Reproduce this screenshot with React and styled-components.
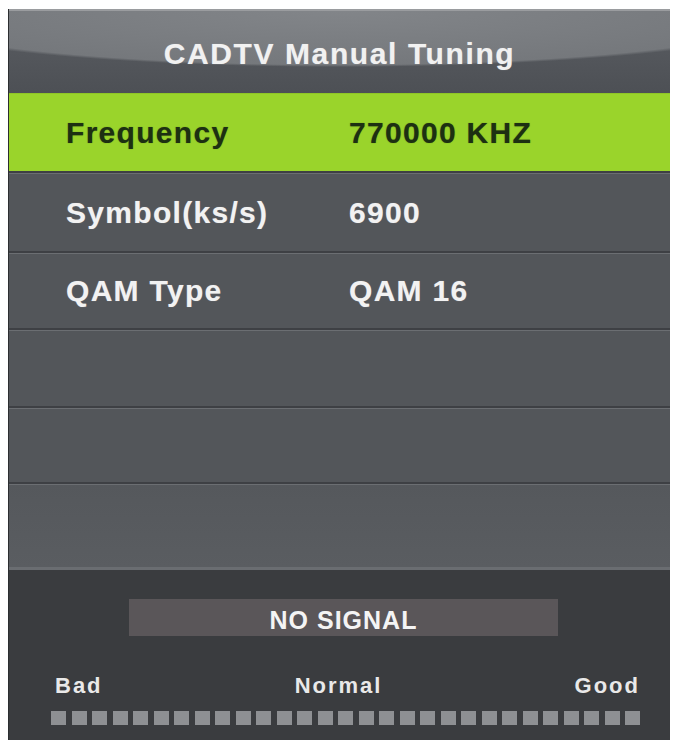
import React from "react";
import styled, { createGlobalStyle } from "styled-components";

const GlobalStyle = createGlobalStyle`
  html, body {
    margin: 0;
    padding: 0;
    background: #ffffff;
  }
  body {
    padding: 9px 6px 0 8px;
    height: 740px;
    overflow: hidden;
    box-sizing: border-box;
    font-family: "Liberation Sans", Arial, sans-serif;
  }
`;

const Panel = styled.div`
  display: flex;
  flex-direction: column;
  height: 731px;
  background: #3a3c3f;
  border-left: 1px solid #2c2e31;
`;

const Header = styled.div`
  height: 84px;
  display: flex;
  align-items: center;
  justify-content: center;
  background:
    radial-gradient(ellipse 470px 56px at 50% 0, #828589 0%, #75787c 96%, transparent 100%),
    linear-gradient(#5b5e63, #4d5055);
  border-top: 2px solid #9a9c9f;
  box-sizing: border-box;
`;

const Title = styled.h1`
  margin: 0;
  padding-top: 4px;
  font-size: 30px;
  font-weight: bold;
  letter-spacing: 1.6px;
  color: #f1f1f1;
  text-shadow: 0 0 1px rgba(255, 255, 255, 0.4);
`;

const Row = styled.div`
  height: ${(p) => p.h}px;
  box-sizing: border-box;
  display: grid;
  grid-template-columns: 283px 1fr;
  align-items: center;
  padding-left: 57px;
  background: ${(p) => (p.active ? "#9ad42b" : "#53565a")};
  border-top: 1px solid ${(p) => (p.active ? "#8fc626" : "#6b6e72")};
  border-bottom: 2px solid #3e4044;
`;

const Cell = styled.span`
  font-size: 30px;
  font-weight: bold;
  letter-spacing: 1.3px;
  color: ${(p) => (p.active ? "#1d3012" : "#f2f2f2")};
  text-shadow: ${(p) =>
    p.active ? "0 0 1px rgba(20, 40, 10, 0.5)" : "0 0 1px rgba(255, 255, 255, 0.4)"};
`;

const Filler = styled.div`
  height: 86px;
  box-sizing: border-box;
  background: linear-gradient(#55585c, #5a5d61);
  border-top: 1px solid #6b6e72;
  border-bottom: 3px solid #6a6d71;
`;

const Footer = styled.div`
  flex: 1;
  display: flex;
  flex-direction: column;
  padding: 29px 30px 0 42px;
  background: #3a3c3f;
`;

const SignalBox = styled.div`
  align-self: flex-start;
  margin-left: 78px;
  width: 429px;
  height: 37px;
  display: flex;
  align-items: flex-end;
  justify-content: center;
  background: #5a5659;
  font-size: 25px;
  font-weight: bold;
  letter-spacing: 1px;
  color: #f4f4f4;
  line-height: 1;
  padding-bottom: 3px;
  box-sizing: border-box;
`;

const Labels = styled.div`
  margin-top: 37px;
  display: flex;
  justify-content: space-between;
  padding-left: 4px;
  font-size: 22px;
  font-weight: bold;
  letter-spacing: 2px;
  color: #e9e9e9;
  line-height: 25px;
`;

const Meter = styled.div`
  margin-top: 13px;
  display: flex;
  justify-content: space-between;
  width: 589px;
`;

const Cellblock = styled.div`
  width: 15px;
  height: 14px;
  background: #8e9093;
`;

const rows = [
  { label: "Frequency", value: "770000 KHZ", active: true, h: 80 },
  { label: "Symbol(ks/s)", value: "6900", h: 80 },
  { label: "QAM Type", value: "QAM 16", h: 77 },
  { label: "", value: "", h: 78 },
  { label: "", value: "", h: 76 },
];

export default function App() {
  return (
    <>
      <GlobalStyle />
      <Panel>
        <Header>
          <Title>CADTV Manual Tuning</Title>
        </Header>
        {rows.map((r, i) => (
          <Row key={i} active={r.active} h={r.h}>
            <Cell active={r.active}>{r.label}</Cell>
            <Cell active={r.active}>{r.value}</Cell>
          </Row>
        ))}
        <Filler />
        <Footer>
          <SignalBox>NO SIGNAL</SignalBox>
          <Labels>
            <span>Bad</span>
            <span>Normal</span>
            <span>Good</span>
          </Labels>
          <Meter>
            {Array.from({ length: 29 }).map((_, i) => (
              <Cellblock key={i} />
            ))}
          </Meter>
        </Footer>
      </Panel>
    </>
  );
}
